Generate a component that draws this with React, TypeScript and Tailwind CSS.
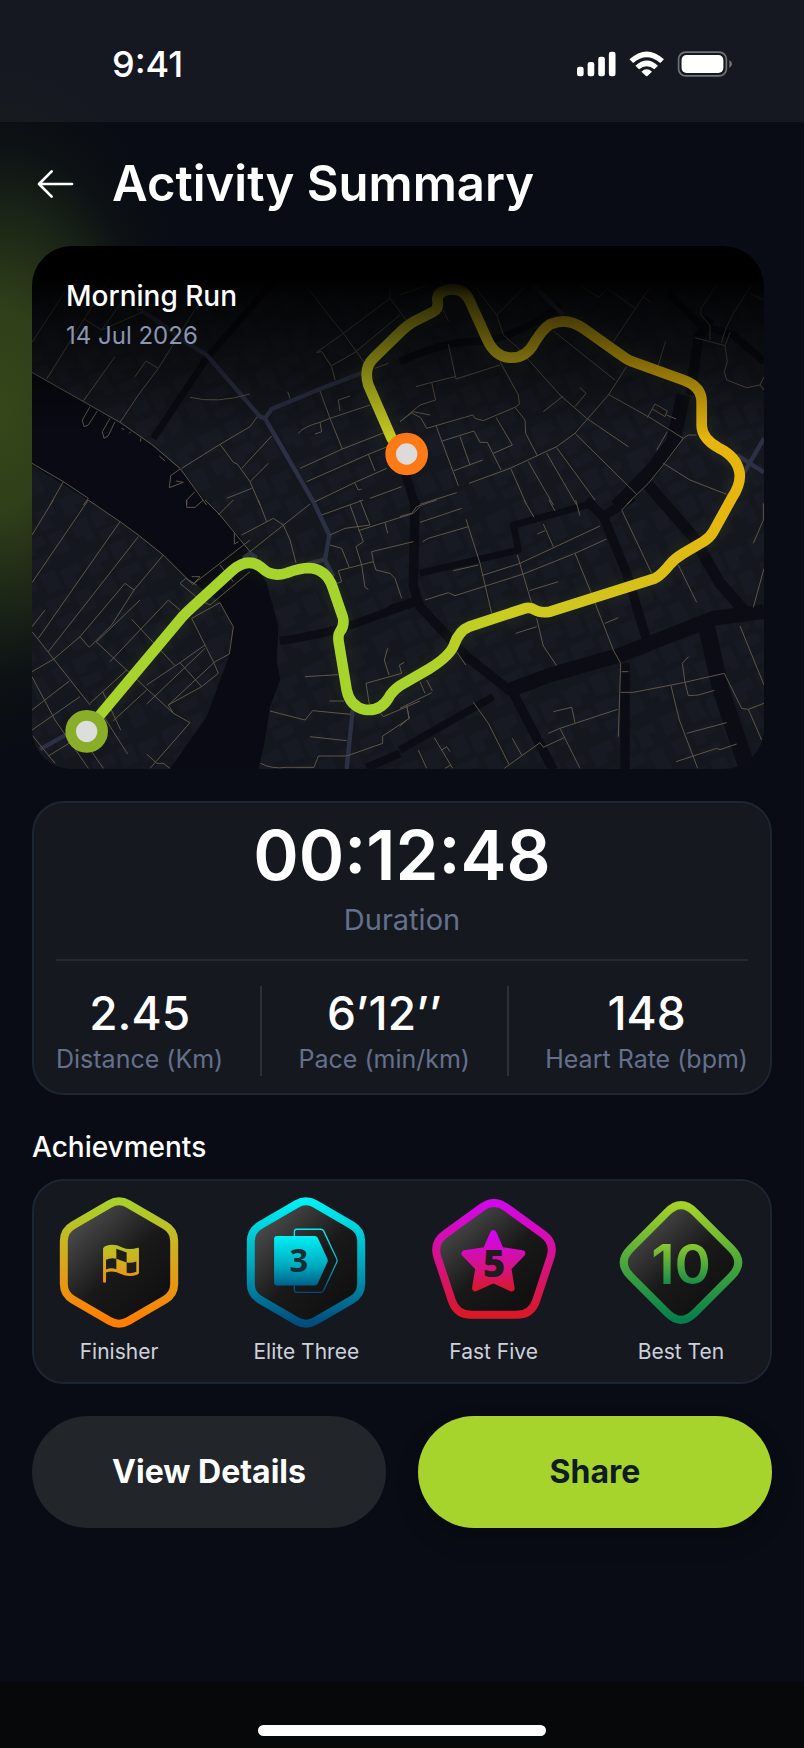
import React from 'react';

interface Stat {
  value: string;
  label: string;
}

interface Achievement {
  id: string;
  label: string;
  outline: string;
  colors: [string, string, string];
  emblem: React.ReactNode;
}

const stats: Stat[] = [
  { value: '2.45', label: 'Distance (Km)' },
  { value: '6’12’’', label: 'Pace (min/km)' },
  { value: '148', label: 'Heart Rate (bpm)' },
];

const HEXAGON =
  'M28 -176 L138 -112 Q166 -96 166 -64 V64 Q166 96 138 112 L28 176 Q0 192 -28 176 L-138 112 Q-166 96 -166 64 V-64 Q-166 -96 -138 -112 L-28 -176 Q0 -192 28 -176 Z';
const PENTAGON =
  'M36 -166 L148 -85 Q184 -59 170 -16 L127 114 Q113 157 68 157 H-68 Q-113 157 -127 114 L-170 -16 Q-184 -59 -148 -85 L-36 -166 Q0 -192 36 -166 Z';
const DIAMOND =
  'M42 -151 L151 -42 Q193 0 151 42 L42 151 Q0 193 -42 151 L-151 42 Q-193 0 -151 -42 L-42 -151 Q0 -193 42 -151 Z';

const achievements: Achievement[] = [
  {
    id: 'finisher',
    label: 'Finisher',
    outline: HEXAGON,
    colors: ['#a8d22b', '#d9a61c', '#ff7d00'],
    emblem: (
      <>
        <path
          d="M-48 -42 Q-46 -48 -40 -50 Q-15 -58 8 -46 Q30 -36 56 -44 Q60 -45 60 -41 V31 Q60 35 56 36 Q30 46 4 34 Q-18 22 -39 30 V57 Q-39 61 -43 61 Q-48 61 -48 57 Z"
          fill="url(#finisher-emblem)"
        />
        <path d="M-8 -41 L23 -30 V0 L-8 -11 Z M-39 -8 Q-24 -16 -8 -11 V20 Q-24 14 -39 21 Z M23 0 Q38 2 52 -3 V28 Q38 34 23 31 Z" fill="#1d1d1c" />
      </>
    ),
  },
  {
    id: 'elite',
    label: 'Elite Three',
    outline: HEXAGON,
    colors: ['#00f0f4', '#00a9bd', '#004c7c'],
    emblem: (
      <>
        <path d="M-35 -80 V-93 Q-35 -100 -28 -100 H44 Q50 -100 53 -95 L92 -12 Q95 -6 92 0 L53 84 Q50 90 44 90 H-28 Q-35 90 -35 83 V69" fill="none" stroke="url(#elite-emblem)" strokeWidth="4" />
        <path d="M-88 -80 H27 Q32 -80 35 -75 L64 -12 Q67 -6 64 0 L35 64 Q32 69 27 69 H-88 Q-96 69 -96 61 V-72 Q-96 -80 -88 -80 Z" fill="url(#elite-emblem)" />
        <text x="-22" y="29" textAnchor="middle" className="font-['Open_Sans'] text-[98px] font-bold" fill="#172c35">
          3
        </text>
      </>
    ),
  },
  {
    id: 'five',
    label: 'Fast Five',
    outline: PENTAGON,
    colors: ['#d306ec', '#d5128a', '#d91828'],
    emblem: (
      <>
        <path
          d="M-2 -87 L20 -37 L84 -27 L42 16 L52 77 L-2 52 L-56 77 L-46 16 L-88 -27 L-24 -37 Z"
          fill="url(#five-emblem)"
          stroke="url(#five-emblem)"
          strokeWidth="20"
          strokeLinejoin="round"
        />
        <text x="0" y="44" textAnchor="middle" className="font-['Open_Sans'] text-[114px] font-extrabold" fill="#1f1b1f">
          5
        </text>
      </>
    ),
  },
  {
    id: 'ten',
    label: 'Best Ten',
    outline: DIAMOND,
    colors: ['#a5d12a', '#4aa83b', '#067f4c'],
    emblem: (
      <text x="0" y="66" textAnchor="middle" className="font-['Inter'] text-[166px] font-semibold" fill="url(#ten-emblem)">
        10
      </text>
    ),
  },
];

const Badge: React.FC<{ item: Achievement }> = ({ item }) => (
  <svg viewBox="-195 -197 390 394" className="h-[131px] w-[130px]" aria-hidden="true">
    <defs>
      <linearGradient id={`${item.id}-ring`} x1="0" y1="0" x2="0" y2="1">
        <stop offset="0" stopColor={item.colors[0]} />
        <stop offset="0.5" stopColor={item.colors[1]} />
        <stop offset="1" stopColor={item.colors[2]} />
      </linearGradient>
      <linearGradient id={`${item.id}-emblem`} gradientUnits="userSpaceOnUse" x1="0" y1="-80" x2="0" y2="85">
        <stop offset="0" stopColor={item.colors[0]} />
        <stop offset="0.55" stopColor={item.colors[1]} />
        <stop offset="1" stopColor={item.colors[2]} />
      </linearGradient>
      <linearGradient id={`${item.id}-face`} x1="0.1" y1="0.1" x2="0.75" y2="0.85">
        <stop offset="0" stopColor="#505050" />
        <stop offset="0.6" stopColor="#191919" />
        <stop offset="1" stopColor="#111111" />
      </linearGradient>
    </defs>
    <path d={item.outline} fill={`url(#${item.id}-face)`} stroke={`url(#${item.id}-ring)`} strokeWidth="24" />
    {item.emblem}
  </svg>
);

const ROUTE =
  'M200 1488 L490 1142 Q500 1132 515 1118 L635 1008 Q685 963 727 1000 Q755 1028 800 1014 Q840 999 868 999 Q918 1002 937 1055 L968 1145 Q975 1170 960 1190 Q953 1200 956 1220 L980 1365 Q990 1415 1035 1424 Q1080 1430 1105 1390 Q1115 1370 1140 1352 L1230 1300 Q1290 1262 1302 1230 Q1317 1187 1350 1174 L1515 1120 Q1530 1115 1545 1125 Q1562 1135 1590 1130 L1905 1030 Q1925 1020 1950 988 Q1965 970 1990 955 L2050 920 Q2070 908 2080 890 L2135 790 Q2165 745 2158 710 Q2150 665 2095 638 Q2045 610 2045 570 L2045 500 Q2045 455 1990 435 L1830 377 Q1820 373 1800 358 L1690 280 Q1640 245 1590 268 Q1570 280 1545 320 Q1520 368 1475 368 Q1425 368 1400 310 L1350 200 Q1335 162 1295 163 Q1252 166 1252 195 Q1258 220 1240 230 L1185 258 Q1165 268 1140 292 L1060 370 Q1030 400 1045 450 L1115 610 L1160 657';

const RouteMap: React.FC = () => (
  <svg viewBox="36 33 2196 1569" preserveAspectRatio="xMidYMid slice" className="block h-full w-full" role="img" aria-label="Route map">
    <defs>
      <pattern id="blocks" width="230" height="190" patternUnits="userSpaceOnUse" patternTransform="rotate(-24)">
        <rect width="230" height="190" fill="#14171e" />
        <path d="M10 12 h70 v34 h-30 v26 h-40 z M98 8 h46 v60 h-46 z M160 20 h58 v26 h-24 v34 h-34 z M14 92 h50 v72 h-26 v-24 h-24 z M82 88 h72 v30 h-40 v18 h-32 z M172 98 h44 v66 h-44 z M86 150 h60 v28 h-60 z" fill="#171a22" />
      </pattern>
      <linearGradient id="route" gradientUnits="userSpaceOnUse" x1="600" y1="1400" x2="2000" y2="600">
        <stop offset="0.32" stopColor="#a6d42d" />
        <stop offset="0.55" stopColor="#cbcb20" />
        <stop offset="0.72" stopColor="#d3c31c" />
        <stop offset="1" stopColor="#e6b60e" />
      </linearGradient>
      <linearGradient id="shade" x1="0" y1="0" x2="0" y2="1">
        <stop offset="0" stopColor="#000" />
        <stop offset="0.06" stopColor="#000" />
        <stop offset="0.1" stopColor="#000" stopOpacity="0.78" />
        <stop offset="0.37" stopColor="#000" stopOpacity="0" />
      </linearGradient>
      <filter id="glow" x="-10%" y="-10%" width="120%" height="120%">
        <feGaussianBlur stdDeviation="26" />
      </filter>
    </defs>

    <rect x="36" y="33" width="2196" height="1569" fill="url(#blocks)" />

    {/* river */}
    <path
      d="M36 415 L200 508 L300 565 L395 630 L480 705 L560 800 L660 905 L740 1045 L775 1175 L770 1275 L780 1335 L750 1415 L735 1515 L715 1602 H450 L560 1445 L625 1270 L640 1175 L600 1100 L510 1035 L430 960 L350 897 L205 795 L36 690 Z"
      fill="#090a13"
    />

    {/* unlit wide roads */}
    <g fill="none" stroke="#0b0c14" strokeLinejoin="round">
      <path d="M760 140 L560 370 L400 610" strokeWidth="20" />
      <path d="M780 1218 Q900 1200 980 1175 L1200 1095 M1040 1598 L1140 1555" strokeWidth="24" />
      <g transform="translate(1140 0)">
        <path d="M0 380 Q150 310 260 320 Q400 280 480 210 M800 170 L900 270 L1000 300 L1092 380" strokeWidth="22" />
        <path d="M930 250 L895 310 L870 480" strokeWidth="30" />
        <path d="M850 480 L820 620 L760 700 L650 815" strokeWidth="42" />
        <path d="M15 710 L45 810" strokeWidth="26" />
      </g>
      <g transform="translate(1140 795)">
        <path d="M45 0 L40 260 L60 320 L200 470 L340 580 L460 810" strokeWidth="28" />
        <path d="M60 220 L355 150 L340 75 L580 10" strokeWidth="20" />
        <path d="M-30 330 L60 300 M560 0 L610 50 L680 220 L740 420 M610 50 L700 -10 M675 490 V810" strokeWidth="28" />
        <path d="M0 750 L280 590" strokeWidth="22" />
        <path d="M330 570 L450 525 L660 465 L940 355 L1092 335" strokeWidth="44" />
        <path d="M740 -50 L880 110 L960 250 L1030 330" strokeWidth="34" />
        <path d="M920 380 L960 560 L1050 830" strokeWidth="50" />
      </g>
    </g>

    {/* arterial roads */}
    <g fill="none" stroke="#2c3044" strokeWidth="13" strokeLinejoin="round">
      <path d="M350 220 Q430 265 480 310 L560 360 L720 545 L735 550 L880 800 L928 900 L915 975 L940 1025 M735 550 L755 522 L900 462 L1030 412 M860 987 L915 973" />
      <path d="M998 1425 L980 1602 M60 1543 L140 1498 M670 970 L690 955 L710 970" />
      <path d="M1540 150 L1630 240 M2165 725 L2232 610 M2150 660 L2232 712" />
    </g>

    {/* streets */}
    <g fill="none" stroke="#5f5648" strokeWidth="3" strokeLinejoin="round">
      <path d="M36 322 L135 170 M80 432 L300 80 M36 412 L200 505 L300 562 L395 628 L480 700 M36 685 L130 740 L205 790 M190 498 L285 365 M300 562 L355 480 L415 400 L530 215 M345 425 L378 378 L415 400 M190 250 L245 285 L320 180 M245 285 L370 230 M90 810 L130 740 M190 810 L205 790" />
      <path d="M210 515 L187 555 L192 575 L205 570 L232 528 M270 550 L247 590 L252 610 L265 602 L285 560 M305 580 L313 584 M328 595 L332 590 M362 620 V610 M418 663 L435 678" />
      <path d="M510 487 Q590 507 690 477 M485 700 L600 628 L690 575 L712 545 M600 628 L640 682 L652 687 L690 740 L720 810 M665 700 L755 603 M690 740 L745 685 M620 790 L695 760 M480 700 L560 810 M480 702 L452 722 L448 758 L490 742 L468 738 M525 770 L500 795 V810" />
      <path d="M860 155 L945 265 L970 295 L1045 400 M890 352 L970 295 L1110 190 L1170 270 M890 352 L905 350 L935 395 L945 435 M935 392 L1005 352 L1140 240 M1110 190 V155 M900 468 L930 550 L967 642 M930 550 L1050 510 M960 528 L955 495 L990 483 M835 595 Q850 575 900 562 L905 590 L885 597 M900 562 L930 550 M840 700 L967 642 L1100 590 M860 740 L1045 658 L1115 630 M1045 658 L1065 708 M885 800 L1010 740 L1100 700 M1005 745 L1015 765 L1025 762 M1050 790 L1145 755 M803 470 L810 490 M1065 400 L1105 385 M1140 560 L1180 530 L1230 540" />
      <g transform="translate(1140 0)">
        <path d="M225 155 L290 240 L310 300 L350 335 L480 480 L560 550 L685 635 M290 240 L380 150 M145 328 L168 432 L300 390 M48 455 L95 442 L165 425 M95 442 L107 495 L60 510 L0 560 M300 380 L355 480 L358 508 L345 517 L250 557 L225 550 L218 540 L80 580 L62 548 L32 532 M345 517 L375 555 L377 595 L412 662" />
        <path d="M108 572 L175 752 M127 618 L222 588 L240 622 L262 622 L303 705 M180 605 L210 690 M162 707 L248 675 M288 547 L337 630 L280 655 M207 745 L330 700 L470 635 L525 595 L625 480 L680 395 M430 530 L487 485 M525 515 L558 475 L540 458 M460 288 L645 435 M640 320 L750 155 M535 150 L597 187 L622 160 L705 220 M730 185 L752 203 M775 390 L797 318 M130 225 L145 258" />
        <path d="M625 478 L750 548 L850 610 L865 600 H890 M742 548 L765 507 L802 528 L795 545 L757 522 M800 540 L828 552 M770 645 L802 590 M850 610 L790 690 L745 745 L680 808 M790 685 L870 735 L980 778 M525 595 L710 778 M470 638 L585 795 M440 655 L530 810 M385 680 L460 810 M333 702 L380 810 M60 808 L170 773" />
        <path d="M885 308 L975 332 L982 380 L973 410 L980 435 L1040 458 L1080 450 L1092 425 M1080 450 L1092 465 M930 315 V272 L903 240 V220 L950 150 M965 325 Q970 290 1000 235 L1055 150 M975 332 L990 292 M1050 175 L1092 195 M0 180 L80 150" />
      </g>
      <g transform="translate(0 795)">
        <path d="M36 105 L100 0 M36 248 L205 0 M205 0 L300 65 L355 105 L430 165 L520 255 M55 415 L300 65 M36 380 L75 330 M85 455 L355 110 M100 478 L180 410 L315 250 L342 270 L275 375 L208 442 L180 410 M342 270 L430 165 M36 515 L100 478 M36 395 L210 615 M270 485 L445 300 L480 330 M228 425 L460 640 M230 425 L360 300 M335 358 L465 497 M210 610 L320 510 M36 690 L180 590 M36 630 L148 543 M36 530 L105 660 L205 805 M36 705 L105 790 M85 768 L180 710 M215 755 L250 805 M245 640 L323 762 M280 662 L380 570 M248 575 L302 690" />
        <path d="M380 555 L480 488 L555 435 L515 355 L600 308 L620 345 M480 488 L545 560 L595 520 L580 485 L555 435 M380 612 L555 445 M445 615 L545 560 M445 615 L585 485 L628 462 L640 380 L620 345 M460 640 L510 668 L390 805 M460 640 L445 615 M380 762 L410 790 L430 790 L450 805 M480 250 L540 300 L570 315 L690 215 M480 250 L497 235 L530 255 M515 230 H540 L520 252 L690 120 M640 245 L600 195" />
        <path d="M555 0 L600 45 L645 100 L690 155 L870 12 M500 0 L500 22 H525 L550 0 M595 45 L640 0 M665 105 L760 55 L790 75 L810 120 L828 188 M715 0 L740 65 M643 98 V132 L655 125 M905 45 L1030 0 M930 105 L975 85 L1050 75 L1020 0 M990 15 L1030 125 L1008 140 L1025 195 L1035 262 L1045 268 M930 135 L965 145 L988 203 M940 235 L952 250 L965 245 L955 212 L1060 185 L1068 210 L1110 220 L1125 235 L1145 295 M1060 185 L1055 155 L1180 125 M1015 92 L1180 40 L1200 20 M1095 68 L1103 100" />
        <path d="M855 530 L955 524 M1048 612 L1038 550 L1145 520 L1138 495 L1153 487 M1103 445 L1093 480 L1107 525 M928 603 H972 M750 633 L855 660 L878 632 L992 643 M870 710 L980 722 M722 790 Q755 808 800 802 H882 L895 768 H980 L1088 730 V708 L1168 655 L1160 618 M1082 640 L1090 650 L1200 603" />
      </g>
      <g transform="translate(1140 795)">
        <path d="M60 67 L185 25 M0 50 L35 40 L50 20 L110 0 M68 125 L85 115 L205 80 M198 58 L240 190 L275 340 M160 212 L235 195 M245 227 L360 190 L600 78 M75 300 L145 278 L165 287 L370 222 L525 160 L620 117 M352 165 L395 310 M388 272 L475 245 M412 102 L435 92 M430 72 L460 140 M372 0 L402 52 M447 0 L465 33 M527 0 L540 47 M525 160 L572 275 L640 450 L662 490 L655 710 M615 370 L655 353 M665 515 H685 M347 400 L410 380 M410 355 L430 438 L470 497 M170 455 L197 495 M60 545 L75 580 M80 540 L97 573 M0 625 L95 578 M20 615 L27 655 L0 678" />
        <path d="M695 0 L665 30 L755 220 M835 195 L890 307 M1090 10 V60 L1060 130 M1092 205 L1060 322 M1020 378 L1092 555 M662 577 H700 L850 548 L973 520 L1025 625 L1045 628 L1092 610 M1045 628 L1085 720 M865 470 L847 490 L855 548 L865 587 L895 585 L943 571 M813 557 L838 660 L893 805 M860 700 L980 668 M828 785 L950 745 L960 749 L1010 732" />
        <path d="M445 700 L480 685 L653 628 M460 635 L515 622 L525 668 M480 685 L540 805 M313 805 L420 728 L430 742 L492 713 M220 607 L265 670 L327 793 M337 715 L365 765 M103 713 L158 805 M125 750 L140 740 L150 755 M55 750 L80 805 M135 805 L152 795" />
      </g>
    </g>

    {/* recorded route */}
    <path d={ROUTE} fill="none" stroke="#a6d42d" strokeWidth="40" opacity="0.08" filter="url(#glow)" />
    <path d={ROUTE} fill="none" stroke="url(#route)" strokeWidth="32" strokeLinejoin="round" />
    <circle cx="200" cy="1489" r="48" fill="#dcdedb" stroke="#8aae28" strokeWidth="32" />
    <circle cx="1160" cy="657" r="48" fill="#dcdbd9" stroke="#fd7a17" strokeWidth="32" />

    <rect x="36" y="33" width="2196" height="1569" fill="url(#shade)" />
  </svg>
);

const StatusBar: React.FC = () => (
  <div className="flex h-[122px] items-center justify-between bg-white/5 pt-1.5 pr-[71px] pl-28">
    <time className="text-4xl font-medium text-white">9:41</time>
    <svg viewBox="0 0 470 78" className="h-[26px] w-[156px]" aria-hidden="true">
      <g fill="#fff">
        <rect x="0" y="47" width="20" height="29" rx="7" />
        <rect x="32" y="33" width="20" height="43" rx="7" />
        <rect x="64" y="17" width="20" height="59" rx="7" />
        <rect x="96" y="2" width="20" height="74" rx="7" />
        <path d="M158 25 Q210 -23 262 25 L251 36 Q210 2 169 36 Z" />
        <path d="M176 44 Q210 13 244 44 L233 55 Q210 36 187 55 Z" />
        <path d="M194 62 Q210 48 226 62 L212 75 Q210 77 208 75 Z" />
        <rect x="315" y="12" width="126" height="54" rx="15" />
        <path d="M459 27 Q467 31 467 39 Q467 47 459 51 Z" opacity="0.4" />
      </g>
      <rect x="306" y="3" width="144" height="72" rx="22" fill="none" stroke="#fff" strokeWidth="5" opacity="0.4" />
    </svg>
  </div>
);

export default function App() {
  return (
    <div className="relative isolate flex min-h-screen flex-col overflow-hidden bg-[#090c14] font-['Inter','Open_Sans',sans-serif] text-white">
      <div className="absolute top-[70px] -left-[200px] -z-10 h-[680px] w-[400px] bg-[radial-gradient(closest-side,#35471a_0%,#2f3f19_30%,#1c2717_55%,#10161488_78%,transparent_100%)]" />

      <StatusBar />

      <main className="flex flex-1 flex-col px-8">
        <header className="flex h-[124px] items-center gap-9">
          <button type="button" aria-label="Back" className="w-11">
            <svg viewBox="0 0 132 96" className="h-8 w-11" fill="none" stroke="#fff" strokeWidth="8" strokeLinecap="round" strokeLinejoin="round" aria-hidden="true">
              <path d="M120 48 H21 M59 10 L21 48 L59 86" />
            </svg>
          </button>
          <h1 className="text-[49px] font-semibold">Activity Summary</h1>
        </header>

        <section className="relative mr-2 aspect-[732/523] overflow-hidden rounded-[40px]">
          <RouteMap />
          <div className="absolute top-8 left-[34px]">
            <h2 className="text-[28px] leading-9 font-medium">Morning Run</h2>
            <p className="mt-1 text-2xl leading-9 text-[#8a95b0]">14 Jul 2026</p>
          </div>
        </section>

        <section className="mt-8 rounded-[32px] border-2 border-[#1c2632] bg-[#15181f] px-[22px] pb-4">
          <div className="flex flex-col items-center pt-3 pb-[23px]">
            <p className="text-[69px] leading-20 font-semibold">00:12:48</p>
            <p className="mt-2 text-[29px] leading-[33px] text-[#65708c]">Duration</p>
          </div>
          <div className="flex items-center justify-between border-t-2 border-[#26292f] pt-6">
            {stats.map((stat, i) => (
              <React.Fragment key={stat.label}>
                {i > 0 && <div className="h-[90px] w-0.5 bg-[#2d3036]" />}
                <div className="flex flex-col items-center">
                  <p className="text-[46px] leading-[56px] font-medium">{stat.value}</p>
                  <p className="text-[25px] leading-9 text-[#65708c]">{stat.label}</p>
                </div>
              </React.Fragment>
            ))}
          </div>
        </section>

        <h2 className="mt-8 text-[28px] leading-10 font-medium">Achievments</h2>
        <ul className="mt-3 flex justify-between rounded-[32px] border-2 border-[#1c2632] bg-[#15181f] pt-4 pr-6 pb-4 pl-5">
          {achievements.map((item) => (
            <li key={item.id} className="flex flex-col items-center">
              <Badge item={item} />
              <span className="mt-2.5 text-[21px] leading-7 text-[#cdd1dc]">{item.label}</span>
            </li>
          ))}
        </ul>

        <div className="mt-8 grid grid-cols-2 gap-8">
          <button type="button" className="h-28 rounded-full bg-[#222529] text-[32px] font-bold">
            View Details
          </button>
          <button type="button" className="h-28 rounded-full bg-[#a6d42d] text-[32px] font-bold text-[#101c23] shadow-[0_12px_24px_rgba(0,0,0,0.2)]">
            Share
          </button>
        </div>
      </main>

      <footer className="flex h-[66px] items-end justify-center bg-[#060809] pb-3">
        <div className="h-[11px] w-[288px] rounded-full bg-white" />
      </footer>
    </div>
  );
}
